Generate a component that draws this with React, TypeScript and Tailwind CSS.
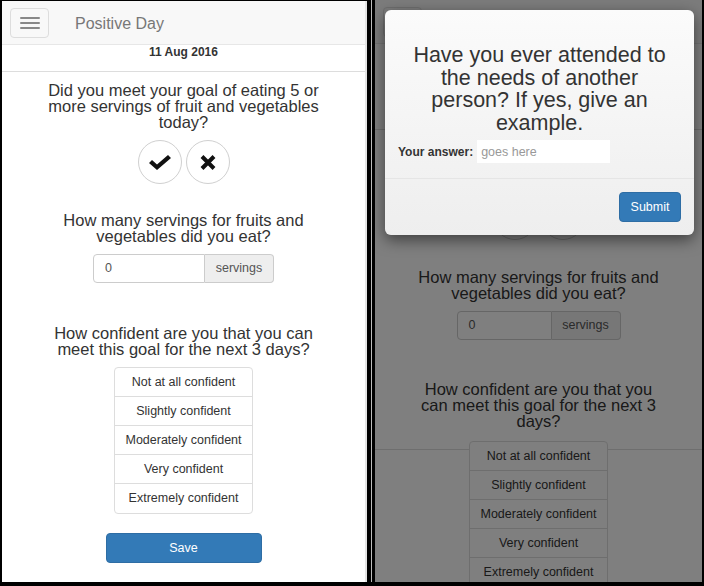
import React from "react";

const levels = [
    "Not at all confident",
    "Slightly confident",
    "Moderately confident",
    "Very confident",
    "Extremely confident",
];

const CheckIcon = () => (
    <svg width="22" height="15" viewBox="0 0 22 15">
        <polygon points="0,8 3,5 8,9.5 19,0 22,3 8,15" fill="#111" />
    </svg>
);

const CrossIcon = () => (
    <svg width="16" height="15" viewBox="0 0 16 15">
        <path d="M2 1.5 L14 13.5 M14 1.5 L2 13.5" stroke="#111" strokeWidth="4" />
    </svg>
);

const Navbar = () => (
    <div className="h-[44px] shrink-0 bg-[#f8f8f8] border-b border-[#e7e7e7] flex items-start">
        <div className="ml-[8px] mt-[7px] w-[39px] h-[30px] rounded-[4px] border border-[#ddd] flex flex-col items-center justify-center gap-[3px]">
            <span className="w-[20px] h-[2px] rounded-[1px] bg-[#888]" />
            <span className="w-[20px] h-[2px] rounded-[1px] bg-[#888]" />
            <span className="w-[20px] h-[2px] rounded-[1px] bg-[#888]" />
        </div>
        <span className="ml-[26px] mt-[13px] text-[16px] leading-[20px] text-[#777]">Positive Day</span>
    </div>
);

const YesNo = () => (
    <div className="flex gap-[4px]">
        <button className="w-[44px] h-[44px] rounded-full border border-[#d0d0d0] bg-white flex items-center justify-center">
            <CheckIcon />
        </button>
        <button className="w-[44px] h-[44px] rounded-full border border-[#d0d0d0] bg-white flex items-center justify-center">
            <CrossIcon />
        </button>
    </div>
);

const Servings = ({ wide }: { wide: boolean }) => (
    <div className="flex h-[29px] text-[12.5px] text-[#555]">
        <div className={wide ? "w-[112px] border border-[#ccc] rounded-l-[4px] pl-[11px] flex items-center bg-white" : "w-[95px] border border-[#ccc] rounded-l-[4px] pl-[11px] flex items-center bg-white"}>
            0
        </div>
        <div className="w-[69px] border border-l-0 border-[#ccc] rounded-r-[4px] bg-[#eee] flex items-center justify-center">
            servings
        </div>
    </div>
);

const Confidence = () => (
    <div className="relative w-[139px] border border-[#ddd] rounded-[4px] bg-white divide-y divide-[#ddd]">
        {levels.map((l) => (
            <div key={l} className="h-[29px] flex items-center justify-center text-[12.5px] text-[#333]">
                {l}
            </div>
        ))}
    </div>
);

const App = () => {
    return (
        <div className="w-[704px] h-[586px] bg-black flex items-start font-['Liberation_Sans',Arial,sans-serif] text-[#333] overflow-hidden">
            {/* left phone */}
            <div className="ml-[2px] mt-[1px] w-[365px] h-[581px] bg-white border-r-2 border-[#e4e4e4] overflow-hidden flex flex-col">
                <Navbar />
                <div className="h-[27px] shrink-0 border-b border-[#ddd] text-center text-[12px] leading-[14px] font-bold">
                    11 Aug 2016
                </div>
                <div className="flex flex-col items-center">
                    <p className="mt-[10px] w-[290px] text-center text-[16.5px] leading-[16px]">
                        Did you meet your goal of eating 5 or more servings of fruit and vegetables today?
                    </p>
                    <div className="mt-[10px]">
                        <YesNo />
                    </div>
                    <p className="mt-[28px] w-[290px] text-center text-[16.5px] leading-[16px]">
                        How many servings for fruits and vegetables did you eat?
                    </p>
                    <div className="mt-[10px]">
                        <Servings wide />
                    </div>
                    <p className="mt-[42px] w-[290px] text-center text-[16.5px] leading-[16px]">
                        How confident are you that you can meet this goal for the next 3 days?
                    </p>
                    <div className="mt-[10px]">
                        <Confidence />
                    </div>
                    <button className="mt-[19px] w-[156px] h-[30px] rounded-[4px] bg-[#337ab7] border border-[#2e6da4] text-white text-[12.5px]">
                        Save
                    </button>
                </div>
            </div>

            <div className="w-[4px] h-[582px]" />
            <div className="w-[1px] h-[582px] bg-[#bdbdbd]" />
            <div className="w-[3px] h-[582px]" />

            {/* right phone with modal */}
            <div className="relative w-[327px] h-[582px] bg-white overflow-hidden">
                {/* faint rule of the page behind */}
                <div className="absolute left-0 right-0 top-[449px] h-px bg-[#ddd]" />
                <div className="flex flex-col">
                    <Navbar />
                    <div className="h-[86px] shrink-0 border-b border-[#ddd]" />
                    <div className="flex flex-col items-center">
                        {/* first question sits fully under the modal */}
                        <div className="mt-[6px] h-[50px] w-[248px]" />
                        <div className="mt-[10px]">
                            <YesNo />
                        </div>
                        <p className="mt-[29px] w-[248px] text-center text-[16.5px] leading-[16px]">
                            How many servings for fruits and vegetables did you eat?
                        </p>
                        <div className="mt-[10px]">
                            <Servings wide={false} />
                        </div>
                        <p className="mt-[41px] w-[248px] text-center text-[16.5px] leading-[16px]">
                            How confident are you that you can meet this goal for the next 3 days?
                        </p>
                        <div className="mt-[12px]">
                            <Confidence />
                        </div>
                    </div>
                </div>

                <div className="absolute inset-0 bg-black/50" />

                <div className="absolute left-[10px] top-[10px] w-[309px] h-[225px] rounded-[6px] bg-gradient-to-b from-[#fbfbfb] to-[#eeeeee] shadow-[0_5px_15px_rgba(0,0,0,0.5)] flex flex-col">
                    <h3 className="pt-[34px] px-[15px] text-center text-[21.5px] leading-[22.6px] text-[#333]">
                        Have you ever attended to the needs of another person? If yes, give an example.
                    </h3>
                    <div className="mt-[6px] pl-[13px] flex items-center">
                        <span className="shrink-0 whitespace-nowrap text-[12px] leading-[14px] font-bold text-[#333]">Your answer:</span>
                        <div className="shrink-0 ml-[4px] w-[133px] h-[23px] bg-white pl-[4px] flex items-center text-[12.5px] text-[#999]">
                            goes here
                        </div>
                    </div>
                    <div className="mt-[15px] border-t border-[#e5e5e5] flex justify-end pt-[13px] pr-[13px]">
                        <button className="w-[62px] h-[30px] rounded-[4px] bg-[#337ab7] border border-[#2e6da4] text-white text-[12.5px]">
                            Submit
                        </button>
                    </div>
                </div>
            </div>
        </div>
    );
};

export default App;
